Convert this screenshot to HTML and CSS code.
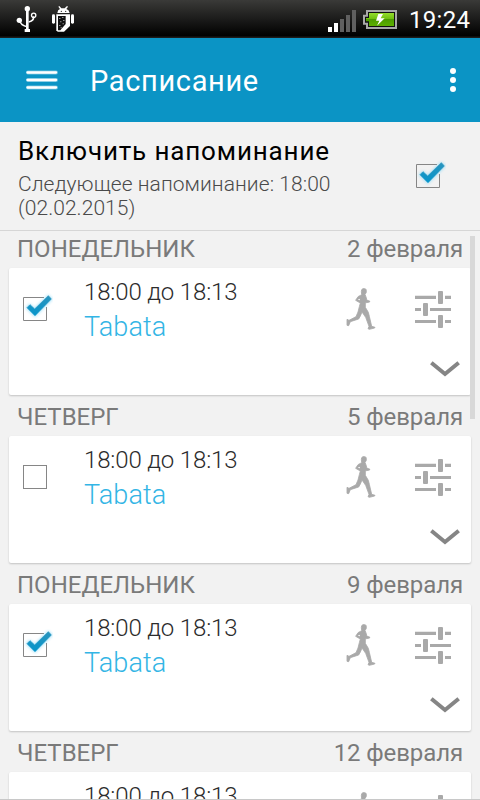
FILE: index.html
```
<!DOCTYPE html>
<html lang="ru">
<head>
    <meta charset="UTF-8">
    <meta name="viewport" content="width=device-width, initial-scale=1.0">
    <title>Расписание</title>
    <link rel="stylesheet" href="styles.css">
</head>
<body>
    <svg class="defs">
        <defs>
            <linearGradient id="tick" x1="0" y1="0" x2="0" y2="1">
                <stop offset="0" stop-color="#2a94bd"/>
                <stop offset="1" stop-color="#0595cb"/>
            </linearGradient>
            <linearGradient id="charge" x1="0" y1="0" x2="0" y2="1">
                <stop offset="0" stop-color="#94dc2c"/>
                <stop offset="0.45" stop-color="#6fc010"/>
                <stop offset="0.5" stop-color="#4c9c00"/>
                <stop offset="1" stop-color="#5cb000"/>
            </linearGradient>
            <filter id="glow" x="-40%" y="-40%" width="180%" height="180%">
                <feGaussianBlur stdDeviation="4"/>
            </filter>
        </defs>
        <symbol id="box-off" viewBox="66 99 93 87">
            <rect x="70.5" y="112.500" width="69" height="69" fill="none" stroke="#868686" stroke-width="3"/>
        </symbol>
        <symbol id="box-on" viewBox="66 99 93 87">
            <path d="M132 112.500H70.500V181.500H139.500V141" fill="none" stroke="#868686" stroke-width="3"/>
            <path d="M80 143L89 134L104 147L145 107L155 117L105 168Z" fill="#7fd4f5" stroke="#7fd4f5" stroke-width="4" opacity="0.7" filter="url(#glow)"/>
            <path d="M81 143L90 134L104 147L145 107L154 117L105 167Z" fill="url(#tick)" stroke="url(#tick)" stroke-width="2"/>
        </symbol>
        <symbol id="runner" viewBox="45 78 96 135">
            <path d="M95 89Q98 85 104 86Q110 87 109 92Q110 99 105 103L108 111L111 121L119 123V126L109 128L106 128L106 142L115 157L118 169L125 199L135 202L134 204L118 208L114 206L117 199L107 172L96 156L91 168L86 177L61 185L56 197L51 196V178L57 181L78 170L84 156L88 140L91 129L77 121L84 110L95 104L94 95Z" fill="#a9a9a9" stroke="#a9a9a9" stroke-width="2.500"/>
            <path d="M83 119L89 116L90 121Z" fill="#fff"/>
        </symbol>
        <symbol id="sliders" viewBox="255 93 108 111">
            <path d="M255 107h63v10h-63zM345 107h18v10h-18zM255 144h18v9h-18zM300 144h63v9h-63zM255 180h63v9h-63zM345 180h18v9h-18z" fill="#a9a9a9"/>
            <rect x="324" y="93" width="15" height="39" rx="3" fill="#a9a9a9"/>
            <rect x="279" y="129" width="15" height="39" rx="3" fill="#a9a9a9"/>
            <rect x="324" y="165" width="15" height="39" rx="3" fill="#a9a9a9"/>
        </symbol>
        <symbol id="chevron" viewBox="300 300 90 51">
            <path d="M304 308L345 342L386 308" fill="none" stroke="#858585" stroke-width="12"/>
        </symbol>
    </svg>

    <div class="statusbar">
        <svg class="usb" viewBox="48 15 66 84">
            <path d="M60 62Q62 77 82 80M100 49Q103 62 86 66" fill="none" stroke="#fff" stroke-width="4.500"/>
            <path d="M82 27V90" stroke="#fff" stroke-width="8"/>
            <circle cx="82" cy="26" r="8" fill="#fff"/>
            <circle cx="58" cy="61" r="8" fill="#fff"/>
            <circle cx="101" cy="46" r="6.500" fill="none" stroke="#fff" stroke-width="4"/>
            <path d="M74 87h16v9h-16z" fill="#fff"/>
        </svg>
        <svg class="droid" viewBox="153 15 72 84">
            <path d="M172 39Q173 29 180 27L175 20L178 18L184 25H194L201 18L204 20L199 27Q207 29 209 39Z" fill="#fff"/>
            <path d="M169 43H210V78L192 95H173L169 91Z" fill="#fff"/>
            <path d="M174 48H197V72L181 91H174Z" fill="#111"/>
            <circle cx="184" cy="34" r="2" fill="#222"/>
            <circle cx="197" cy="34" r="2" fill="#222"/>
            <rect x="156" y="43" width="9" height="28" rx="4" fill="#fff"/>
            <rect x="213" y="43" width="9" height="28" rx="4" fill="#fff"/>
            <path d="M178 54h3v3h-3zM187 51h3v3h-3zM190 60h3v3h-3zM181 64h3v3h-3zM188 70h3v3h-3zM178 75h3v3h-3zM182 82h3v3h-3z" fill="#ccc"/>
        </svg>
        <svg class="signal" viewBox="0 0 28 22">
            <path d="M0 17h4v5h-4zM6 13h4v9h-4z" fill="#fff"/>
            <path d="M12 9h4v13h-4zM18 5h4v17h-4zM24 0h4v22h-4z" fill="#606060"/>
        </svg>
        <svg class="battery" viewBox="372 30 102 57">
            <path d="M381 30H474V87H381V74H372V44H381Z" fill="#a8a8a8"/>
            <path d="M387 36H468V81H387V68H378V50H387Z" fill="#111"/>
            <path d="M390 39H465V78H390V64H381V54H390Z" fill="url(#charge)"/>
            <path d="M418 42H432L425 55H437L414 77L421 62H411Z" fill="#fff"/>
        </svg>
        <span class="clock">19:24</span>
    </div>

    <div class="actionbar">
        <svg class="menu" viewBox="0 0 32 20">
            <path d="M2 2.500H30M2 10H30M2 17.500H30" stroke="#6dc0de" stroke-width="4" stroke-linecap="round"/>
            <path d="M1.500 2.500H30M1.500 10H30M1.500 17.500H30" stroke="#fff" stroke-width="2.300" stroke-linecap="round"/>
        </svg>
        <h1>Расписание</h1>
        <svg class="more" viewBox="0 0 6 24">
            <circle cx="3" cy="3" r="3"/>
            <circle cx="3" cy="12" r="3"/>
            <circle cx="3" cy="21" r="3"/>
        </svg>
    </div>

    <div class="reminder">
        <div class="reminder-text">
            <h2>Включить напоминание</h2>
            <p>Следующее напоминание: 18:00<br>(02.02.2015)</p>
        </div>
        <svg class="check"><use href="#box-on"/></svg>
    </div>

    <div class="list">
        <div class="scrollbar"></div>
        <div class="day">
            <div class="day-head"><span class="weekday">ПОНЕДЕЛЬНИК</span><span class="date">2 февраля</span></div>
            <div class="card">
                <svg class="check"><use href="#box-on"/></svg>
                <div class="info">
                    <div class="time">18:00 до 18:13</div>
                    <div class="name">Tabata</div>
                </div>
                <svg class="runner"><use href="#runner"/></svg>
                <div class="tools">
                    <svg class="sliders"><use href="#sliders"/></svg>
                    <svg class="chevron"><use href="#chevron"/></svg>
                </div>
            </div>
        </div>
        <div class="day">
            <div class="day-head"><span class="weekday">ЧЕТВЕРГ</span><span class="date">5 февраля</span></div>
            <div class="card">
                <svg class="check"><use href="#box-off"/></svg>
                <div class="info">
                    <div class="time">18:00 до 18:13</div>
                    <div class="name">Tabata</div>
                </div>
                <svg class="runner"><use href="#runner"/></svg>
                <div class="tools">
                    <svg class="sliders"><use href="#sliders"/></svg>
                    <svg class="chevron"><use href="#chevron"/></svg>
                </div>
            </div>
        </div>
        <div class="day">
            <div class="day-head"><span class="weekday">ПОНЕДЕЛЬНИК</span><span class="date">9 февраля</span></div>
            <div class="card">
                <svg class="check"><use href="#box-on"/></svg>
                <div class="info">
                    <div class="time">18:00 до 18:13</div>
                    <div class="name">Tabata</div>
                </div>
                <svg class="runner"><use href="#runner"/></svg>
                <div class="tools">
                    <svg class="sliders"><use href="#sliders"/></svg>
                    <svg class="chevron"><use href="#chevron"/></svg>
                </div>
            </div>
        </div>
        <div class="day">
            <div class="day-head"><span class="weekday">ЧЕТВЕРГ</span><span class="date">12 февраля</span></div>
            <div class="card">
                <svg class="check"><use href="#box-off"/></svg>
                <div class="info">
                    <div class="time">18:00 до 18:13</div>
                </div>
                <svg class="runner"><use href="#runner"/></svg>
                <div class="tools">
                    <svg class="sliders"><use href="#sliders"/></svg>
                </div>
            </div>
        </div>
    </div>
</body>
</html>
```
FILE: styles.css
```
* {
    margin: 0;
    padding: 0;
    box-sizing: border-box;
}
body {
    width: 480px;
    height: 800px;
    overflow: hidden;
    display: flex;
    flex-direction: column;
    background: #f2f2f2;
    font-family: Roboto, "Noto Sans", sans-serif;
}
svg {
    display: block;
    flex: none;
}
.defs {
    width: 0;
    height: 0;
    position: absolute;
}

/* status bar */
.statusbar {
    flex: none;
    height: 38px;
    display: flex;
    align-items: flex-start;
    padding: 5px 9px 0 16px;
    background: linear-gradient(#3a3a38, #000 36px, #1c1c1c 37px);
}
.usb {
    width: 22px;
    height: 28px;
}
.droid {
    width: 24px;
    height: 28px;
    margin-left: 13px;
}
.signal {
    width: 28px;
    height: 22px;
    margin: 5px 7px 0 auto;
}
.battery {
    width: 34px;
    height: 19px;
    margin-top: 5px;
}
.clock {
    width: 61px;
    margin-left: 12px;
    margin-right: 1px;
    color: #fff;
    font-size: 24px;
    line-height: 30px;
    letter-spacing: 0.3px;
    white-space: nowrap;
}

/* action bar */
.actionbar {
    flex: none;
    height: 84px;
    display: flex;
    align-items: center;
    padding: 0 24px 0 26px;
    background: #0b94c5;
    color: #fff;
}
.menu {
    width: 32px;
    height: 20px;
}
.actionbar h1 {
    flex: 1;
    margin-left: 32px;
    padding-top: 2px;
    font-size: 29px;
    font-weight: 400;
    letter-spacing: 0.65px;
}
.more {
    width: 6px;
    height: 24px;
    fill: #fff;
}

/* reminder switch */
.reminder {
    flex: none;
    height: 109px;
    display: flex;
    justify-content: space-between;
    padding: 12px 34px 0 18px;
    border-bottom: 1px solid #d6d6d6;
}
.reminder h2 {
    font-size: 26px;
    line-height: 34px;
    font-weight: 400;
    color: #000;
    letter-spacing: 0.85px;
    white-space: nowrap;
}
.reminder p {
    margin-top: 4px;
    font-size: 21px;
    line-height: 24px;
    font-weight: 300;
    color: #4a4a4a;
    letter-spacing: 0.05px;
    white-space: nowrap;
}
.check {
    width: 31px;
    height: 29px;
    overflow: visible;
}
.reminder .check {
    margin-top: 26px;
}

/* schedule */
.list {
    flex: 1;
    min-height: 0;
    overflow: hidden;
    position: relative;
    padding: 0 9px;
    border-bottom: 1px solid #c8c8c8;
}
.scrollbar {
    position: absolute;
    top: 5px;
    right: 5px;
    width: 5px;
    height: 183px;
    background: #d8d8d8;
}
.day {
    height: 168px;
}
.day-head {
    height: 37px;
    display: flex;
    justify-content: space-between;
    padding: 0 8px;
    color: #7a7a7a;
    font-size: 24px;
    line-height: 36px;
}
.date {
    letter-spacing: -0.1px;
}
.card {
    height: 127px;
    display: flex;
    align-items: flex-start;
    padding: 0 10px 0 13px;
    background: #fff;
    border-radius: 2px;
    box-shadow: 0 1px 2px rgba(0, 0, 0, 0.2);
}
.card .check {
    margin-top: 25px;
}
.info {
    flex: 1;
    padding: 7px 0 0 31px;
    font-weight: 300;
    white-space: nowrap;
}
.time {
    font-size: 24px;
    line-height: 34px;
    color: #2c2c2c;
    letter-spacing: -0.15px;
}
.name {
    font-size: 27px;
    line-height: 37px;
    color: #33b5e5;
    letter-spacing: 0.1px;
}
.runner {
    width: 32px;
    height: 45px;
    margin-top: 18px;
}
.tools {
    width: 84px;
    display: flex;
    flex-direction: column;
}
.sliders {
    width: 36px;
    height: 37px;
    margin: 23px 0 0 38px;
}
.chevron {
    width: 30px;
    height: 17px;
    margin: 32px 0 0 53px;
}
```
